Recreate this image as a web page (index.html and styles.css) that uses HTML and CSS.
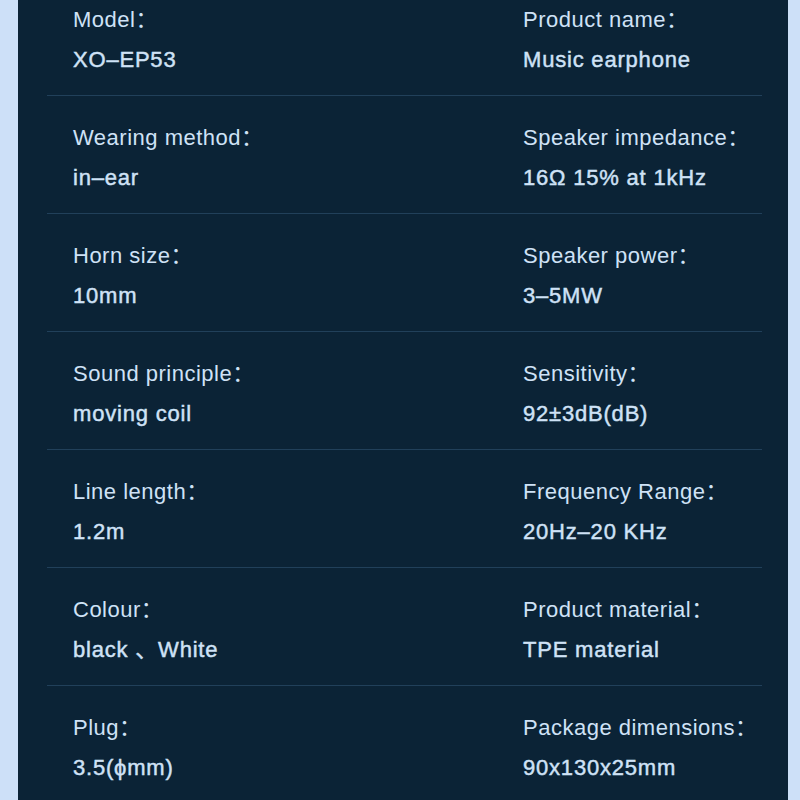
FILE: index.html
```html
<!DOCTYPE html>
<html lang="en">
<head>
<meta charset="utf-8">
<title>Specifications</title>
<link rel="stylesheet" href="styles.css">
</head>
<body>
<div class="panel">
  <div class="specs">
    <div class="row">
      <div class="cell"><div class="label">Model：</div><div class="value">XO–EP53</div></div>
      <div class="cell"><div class="label">Product name：</div><div class="value">Music earphone</div></div>
    </div>
    <div class="row">
      <div class="cell"><div class="label">Wearing method：</div><div class="value">in–ear</div></div>
      <div class="cell"><div class="label">Speaker impedance：</div><div class="value">16Ω 15% at 1kHz</div></div>
    </div>
    <div class="row">
      <div class="cell"><div class="label">Horn size：</div><div class="value">10mm</div></div>
      <div class="cell"><div class="label">Speaker power：</div><div class="value">3–5MW</div></div>
    </div>
    <div class="row">
      <div class="cell"><div class="label">Sound principle：</div><div class="value">moving coil</div></div>
      <div class="cell"><div class="label">Sensitivity：</div><div class="value">92±3dB(dB)</div></div>
    </div>
    <div class="row">
      <div class="cell"><div class="label">Line length：</div><div class="value">1.2m</div></div>
      <div class="cell"><div class="label">Frequency Range：</div><div class="value">20Hz–20 KHz</div></div>
    </div>
    <div class="row">
      <div class="cell"><div class="label">Colour：</div><div class="value">black 、White</div></div>
      <div class="cell"><div class="label">Product material：</div><div class="value">TPE material</div></div>
    </div>
    <div class="row">
      <div class="cell"><div class="label">Plug：</div><div class="value">3.5(ϕmm)</div></div>
      <div class="cell"><div class="label">Package dimensions：</div><div class="value">90x130x25mm</div></div>
    </div>
  </div>
</div>
</body>
</html>
```

FILE: styles.css
```css
html, body {
  margin: 0;
  padding: 0;
  background: #cde0f8;
  height: 800px;
  overflow: hidden;
}
.panel {
  margin-left: 18px;
  width: 770px;
  height: 800px;
  background: #0b2336;
  overflow: hidden;
}
.specs {
  margin: -22px 26px 0 29px;
  font-family: "Liberation Sans", "Noto Sans CJK SC", sans-serif;
  color: #cfe2f6;
}
.row {
  display: grid;
  grid-template-columns: 450px 1fr;
  height: 118px;
  box-sizing: border-box;
  border-bottom: 1px solid #21405a;
}
.cell {
  padding: 22px 0 0 26px;
}
.label {
  font-size: 22px;
  line-height: 40px;
  letter-spacing: 0.5px;
}
.value {
  font-size: 22px;
  line-height: 40px;
  font-weight: 400;
  -webkit-text-stroke: 0.45px #cfe2f6;
  letter-spacing: 0.8px;
}
```
